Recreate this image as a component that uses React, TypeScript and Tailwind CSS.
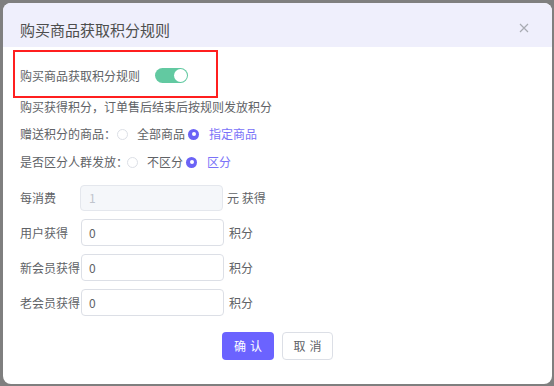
import React from 'react';

const font = { fontFamily: '"Noto Sans CJK SC", "Noto Sans", sans-serif' };

const Radio = ({ checked }: { checked: boolean }) =>
    checked ? (
        <span className="w-[11px] h-[11px] rounded-full bg-[#6b63f6] flex items-center justify-center shrink-0">
            <span className="w-[4px] h-[4px] rounded-full bg-white"></span>
        </span>
    ) : (
        <span className="w-[11px] h-[11px] rounded-full border border-[#dcdfe6] bg-white shrink-0"></span>
    );

const RadioRow = ({ label, first, second, labelW }: { label: string; first: string; second: string; labelW: string }) => (
    <div className="flex items-center h-[18px] text-[12px] text-[#606266] whitespace-nowrap">
        <span className={labelW + ' shrink-0'}>{label}</span>
        <Radio checked={false} />
        <span className="ml-[9px] mr-[3px]">{first}</span>
        <Radio checked={true} />
        <span className="ml-[10px] text-[#7a72f8]">{second}</span>
    </div>
);

const InputRow = ({ label, value, unit }: { label: string; value: string; unit: string }) => (
    <div className="flex items-center text-[12px] text-[#606266] whitespace-nowrap">
        <span className="w-[61px] shrink-0">{label}</span>
        <div className="w-[143px] h-[27px] rounded border border-[#dcdfe6] bg-white text-[#606266] flex items-center px-[7px]">
            {value}
        </div>
        <span className="ml-[5px]">{unit}</span>
    </div>
);

export default function App() {
    return (
        <div className="w-[554px] h-[386px] bg-[#7f7f7f] p-[3px]" style={font}>
            <div className="w-[549px] h-[381px] bg-white rounded-lg overflow-hidden flex flex-col">
                <div className="h-[44px] bg-[#efeffc] px-[17px] pt-[16px] flex items-start justify-between shrink-0">
                    <span className="text-[15px] leading-[22px] text-[#4d4d4d]">购买商品获取积分规则</span>
                    <svg width="10" height="10" viewBox="0 0 10 10" className="mt-[4px] mr-[6px]">
                        <path d="M1 1 L9 9 M9 1 L1 9" stroke="#a8abb2" strokeWidth="1.2" />
                    </svg>
                </div>

                <div className="px-[10px] pt-[3px]">
                    <div className="w-[205px] h-[48px] border-2 border-[#ff1f1f] flex items-center px-[5px] pt-[3px]">
                        <span className="text-[12px] text-[#606266] whitespace-nowrap">购买商品获取积分规则</span>
                        <span className="ml-[15px] w-[33px] h-[15px] rounded-full bg-[#62c9a1] flex items-center justify-end px-[1px]">
                            <span className="w-[13px] h-[13px] rounded-full bg-white"></span>
                        </span>
                    </div>

                    <div className="px-[7px]">
                        <div className="h-[18px] flex items-center text-[12px] text-[#606266] whitespace-nowrap">
                            购买获得积分，订单售后结束后按规则发放积分
                        </div>
                        <div className="mt-[9px]">
                            <RadioRow label="赠送积分的商品：" first="全部商品" second="指定商品" labelW="w-[97px]" />
                        </div>
                        <div className="mt-[10px]">
                            <RadioRow label="是否区分人群发放：" first="不区分" second="区分" labelW="w-[107px]" />
                        </div>

                        <div className="mt-[14px] flex flex-col gap-[8px]">
                            <div className="flex items-center text-[12px] text-[#606266] whitespace-nowrap">
                                <span className="w-[60px] shrink-0">每消费</span>
                                <div className="w-[143px] h-[26px] rounded border border-[#e4e7ed] bg-[#f5f7fa] text-[#c0c4cc] flex items-center px-[8px]">
                                    1
                                </div>
                                <span className="ml-[4px]">元 获得</span>
                            </div>
                            <InputRow label="用户获得" value="0" unit="积分" />
                            <InputRow label="新会员获得" value="0" unit="积分" />
                            <InputRow label="老会员获得" value="0" unit="积分" />
                        </div>
                    </div>
                </div>

                <div className="flex justify-center gap-[8px] mt-[16px]">
                    <button className="w-[52px] h-[28px] rounded bg-[#6b63ff] text-white text-[12px] tracking-[4px] pl-[4px]">
                        确认
                    </button>
                    <button className="w-[51px] h-[28px] rounded border border-[#dcdfe6] bg-white text-[#606266] text-[12px] tracking-[4px] pl-[4px]">
                        取消
                    </button>
                </div>
            </div>
        </div>
    );
}
